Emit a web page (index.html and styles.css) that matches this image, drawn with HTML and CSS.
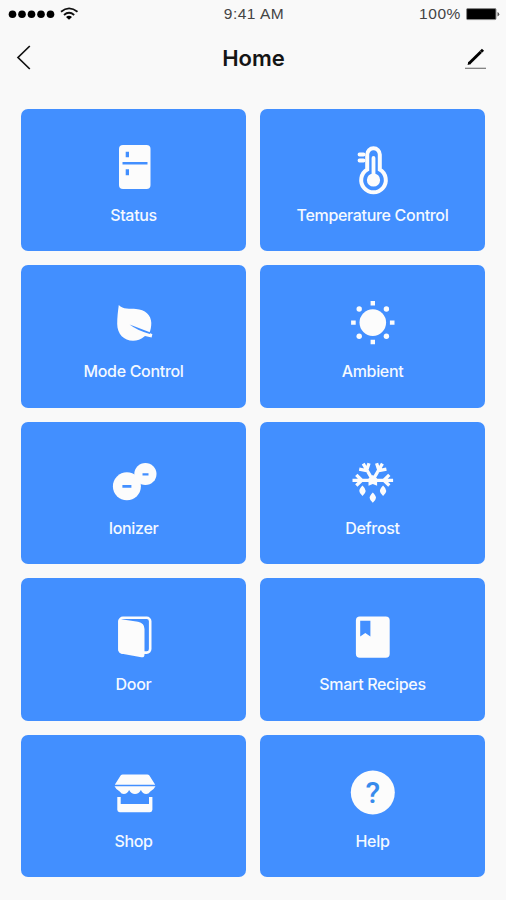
FILE: index.html
```html
<!DOCTYPE html>
<html lang="en">
<head>
<meta charset="utf-8">
<title>Home</title>
<link rel="stylesheet" href="styles.css">
</head>
<body>
<div class="statusbar">
  <div class="signal">
    <svg width="72" height="16" viewBox="0 0 72 16"><circle cx="4.500" cy="8.300" r="3.800"/><circle cx="14" cy="8.300" r="3.800"/><circle cx="23.500" cy="8.300" r="3.800"/><circle cx="33" cy="8.300" r="3.800"/><circle cx="42.500" cy="8.300" r="3.800"/><g fill="none" stroke="#111" stroke-width="1.800"><path d="M53 5.800Q61-1 69.500 5.800"/><path d="M56 9Q61 4.600 66.200 9"/></g><path d="M58 11Q61 8.500 64 11L61 13.800Z"/></svg>
  </div>
  <div class="time">9:41 AM</div>
  <div class="power"><span>100%</span>
    <svg width="34" height="14" viewBox="0 0 34 14"><rect x=".6" y="1.600" width="29.400" height="11" rx="1" fill="#000" stroke="#888" stroke-width="1"/><path d="M31.500 5v4.500q1.800-.6 1.800-2.200t-1.800-2.300z" fill="#555"/></svg>
  </div>
</div>
<header class="nav">
  <svg class="back" width="20" height="28" viewBox="0 0 20 28"><path d="M15.800 2L4 13.500l11.800 11.500" fill="none" stroke="#111" stroke-width="1.700"/></svg>
  <h1>Home</h1>
  <svg class="edit" width="22" height="24" viewBox="0 0 22 24"><path d="M4 17.500L18 3.800" stroke="#000" stroke-width="3"/><path d="M2.600 19l.8-3.300 2.400 2.300z"/><path d="M15 4.800l2.200 2.300" stroke="#aaa" stroke-width=".6"/><path d="M0 22.300h21" stroke="#777" stroke-width="1.200"/></svg>
</header>
<main class="grid">
  <a class="card"><svg class="icon" viewBox="0 0 60 60"><rect x="15" y="8" width="31.500" height="44" rx="4"/><path class="cut" d="M18.500 25h25v2.400h-25zM21.700 14.700h3.300v5.600h-3.300zM21.700 32.300h3.300v6h-3.300z"/></svg><span>Status</span></a>
  <a class="card"><svg class="icon" viewBox="0 0 60 60"><path class="line" stroke-width="4" d="M25.200 32.500V17.500a6.300 6.300 0 0 1 12.600 0v15a12.300 12.300 0 1 1-12.600 0z"/><circle cx="31.500" cy="43" r="6.600"/><path class="line" stroke-width="3.800" stroke-linecap="round" d="M31.500 21v20M17.500 17.500h4M17.500 23.500h4"/></svg><span>Temperature Control</span></a>
  <a class="card"><svg class="icon" viewBox="0 0 60 60"><path d="M14.800 12C19 16.500 26 15.600 32 15.900C41 16.500 47.300 22 47.300 30C47.300 34.500 46.500 37.500 45.300 39.800L48.400 41.300L47.600 44.600L41 43C37 46.500 33 47.800 29 47.800C20 47.800 13.200 41 13.200 31C13.200 25 13.900 18 14.800 12z"/><path class="cut" d="M25.600 31.600L46.500 39.500L45.800 41Q33 37.500 25.600 31.600z"/></svg><span>Mode Control</span></a>
  <a class="card"><svg class="icon" viewBox="0 0 60 60"><circle cx="30.800" cy="29.600" r="13.300"/><path d="M28.600 7.900h4.400v4.600h-4.400zM28.600 46.700h4.400v4.600h-4.400zM9.100 27.400h4.600v4.400h-4.600zM47.900 27.400h4.600v4.400h-4.600z"/><g><circle cx="17.200" cy="16" r="2.700"/><circle cx="44.400" cy="16" r="2.700"/><circle cx="17.200" cy="43.200" r="2.700"/><circle cx="44.400" cy="43.200" r="2.700"/></g></svg><span>Ambient</span></a>
  <a class="card"><svg class="icon" viewBox="0 0 60 60"><circle cx="22.900" cy="36.300" r="14"/><circle cx="41.400" cy="24" r="11.100"/><path class="cut" d="M18.400 35.100h9v2.600h-9zM38.500 23.200h6v2.300h-6z"/></svg><span>Ionizer</span></a>
  <a class="card"><svg class="icon" viewBox="0 0 60 60"><path class="line" stroke-width="3.300" d="M10.500 30.300h40.600M30.800 30.300L21.200 13.600M30.800 30.300L40.400 13.600M14.300 24.800l5.500 5.500-5.500 5.200M47.300 24.800l-5.500 5.500 5.500 5.200M17.200 19.200l7.400 1.500 2.400-7.500M44.400 19.200l-7.400 1.500-2.400-7.500"/><path d="M30.800 25l4.300 3.500v7.200l-4.300-1.600-4.300 1.600v-7.200zM20.500 35.600q3.200 3.200 3.200 5.300t-3.200 5q-3.200-2.900-3.200-5t3.200-5.300zM30.800 42.400q3.200 3.200 3.200 5.300t-3.200 5q-3.200-2.900-3.200-5t3.200-5.300zM41.100 35.600q3.200 3.200 3.200 5.300t-3.200 5q-3.200-2.900-3.200-5t3.200-5.300z"/></svg><span>Defrost</span></a>
  <a class="card"><svg class="icon" viewBox="0 0 60 60"><rect class="line" stroke-width="2.600" x="15.500" y="11.800" width="30.700" height="34.800" rx="3.500"/><path d="M14.200 15.500q0-2.800 3-2.200L34 15.800q6.500 1.300 6.500 7.300v25.400q0 3.200-3.200 2.800L18 47.800q-3.800-.8-3.800-4.300z"/></svg><span>Door</span></a>
  <a class="card"><svg class="icon" viewBox="0 0 60 60"><rect x="13.900" y="10.500" width="33.800" height="41.200" rx="4"/><path class="cut" d="M18.200 14.800h10.200v15.600l-5.100-3.300-5.100 3.300z"/></svg><span>Smart Recipes</span></a>
  <a class="card"><svg class="icon" viewBox="0 0 60 60"><path d="M18.800 11.400h24.400q1.400 0 2.200 1l5.800 9.400H10.800l5.800-9.400q.8-1 2.200-1zM10.500 23.200h41q-1.500 3.300-5.200 5.300-1.700 2.500-4.100 2.500-3.500 0-5.300-4-2 4-5.900 4t-5.900-4q-1.800 4-5.300 4-2.400 0-4.100-2.500-3.700-2-5.200-5.300z"/><path d="M13.300 34h3.400v7h28.300v-7h3.400v12.800q0 2.400-2.400 2.400H15.700q-2.400 0-2.400-2.400z"/></svg><span>Shop</span></a>
  <a class="card"><svg class="icon" viewBox="0 0 60 60"><circle cx="30.800" cy="29.500" r="22"/><text class="mark" x="30.800" y="40" text-anchor="middle">?</text></svg><span>Help</span></a>
</main>
</body>
</html>
```
FILE: styles.css
```css
* { box-sizing: border-box; }
body {
  margin: 0;
  width: 506px;
  height: 900px;
  background: #f9f9f9;
  color: #151515;
  font-family: Inter, "Liberation Sans", sans-serif;
  overflow: hidden;
}
svg { display: block; }
.statusbar {
  display: grid;
  grid-template-columns: 1fr auto 1fr;
  align-items: center;
  height: 28px;
  padding: 0 6px 0 8px;
  font: 15.5px/28px "Liberation Sans", sans-serif;
  color: #444;
}
.time { letter-spacing: .5px; }
.power {
  display: flex;
  justify-content: flex-end;
  align-items: center;
  gap: 5px;
}
.power span { letter-spacing: .6px; }
.nav {
  display: grid;
  grid-template-columns: 60px 1fr 60px;
  align-items: center;
  height: 60px;
  padding: 0 19px 0 14px;
}
.nav h1 {
  margin: 0;
  padding: 0 0 1px 6px;
  text-align: center;
  font-size: 22px;
  font-weight: 600;
  line-height: 30px;
}
.edit { justify-self: end; }
.grid {
  display: grid;
  grid-template-columns: 225px 225px;
  grid-auto-rows: 142.600px;
  gap: 14px;
  padding: 20.500px 0 0 21px;
}
.card {
  display: flex;
  flex-direction: column;
  align-items: center;
  padding-top: 28px;
  border-radius: 7px;
  background: #428fff;
  color: #f4f9ff;
  font-size: 16px;
  font-weight: 550;
  line-height: 22px;
  letter-spacing: -.32px;
}
.card span { margin-top: 7px; }
.icon {
  width: 60px;
  height: 60px;
  margin-left: -1px;
  fill: #fcfcfc;
}
.card:nth-child(odd) .icon { margin-left: 0; }
.cut { fill: #428fff; }
.line { fill: none; stroke: #fcfcfc; }
.mark { fill: #378bec; font: 500 30px Roboto, sans-serif; letter-spacing: 0; }
```
